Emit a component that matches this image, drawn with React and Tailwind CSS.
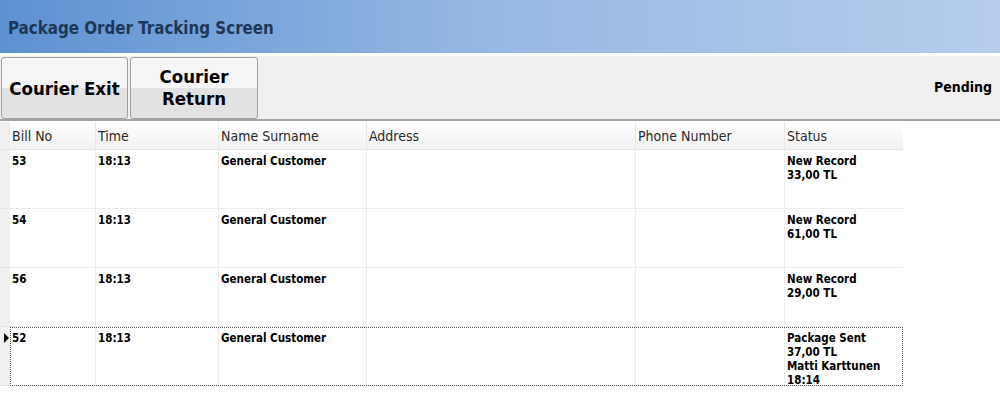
import React from "react";

const rows = [
  { bill: "53", time: "18:13", name: "General Customer", status: ["New Record", "33,00 TL"] },
  { bill: "54", time: "18:13", name: "General Customer", status: ["New Record", "61,00 TL"] },
  { bill: "56", time: "18:13", name: "General Customer", status: ["New Record", "29,00 TL"] },
  { bill: "52", time: "18:13", name: "General Customer", status: ["Package Sent", "37,00 TL", "Matti Karttunen", "18:14"], current: true },
];

const cols = "grid grid-cols-[86px_123px_148px_269px_149px_118px]";

const App = () => {
  return (
    <div className="w-[1000px] h-[397px] overflow-hidden bg-white font-['DejaVu_Sans_Condensed','DejaVu_Sans',sans-serif] text-black">
      {/* Title bar */}
      <div className="h-[53px] bg-gradient-to-r from-[#5d91d2] via-[#98b9e4] to-[#b6cdec] flex items-center pl-[8px] pt-[5px]">
        <h1 className="text-[16.8px] font-bold text-[#1d3856]">Package Order Tracking Screen</h1>
      </div>

      {/* Toolbar */}
      <div className="h-[68px] border-t-[3px] border-white bg-[#f0f0f0] border-b-2 border-b-[#a4a4a4] flex items-center pl-px pr-[8px]">
        <button className="w-[127px] h-[62px] rounded-[3px] border border-[#a0a0a0] bg-gradient-to-b from-[#f6f6f6] from-50% to-[#e2e2e2] to-50% text-[18.5px] font-bold leading-[22px] pt-[2px]">
          Courier Exit
        </button>
        <button className="ml-[2px] w-[128px] h-[62px] rounded-[3px] border border-[#a0a0a0] bg-gradient-to-b from-[#f6f6f6] from-50% to-[#e2e2e2] to-50% text-[18.5px] font-bold leading-[22px] pt-[1px]">
          Courier
          <br />
          Return
        </button>
        <span className="ml-auto text-[14px] font-bold">Pending</span>
      </div>

      {/* Grid */}
      <div className="flex">
        <div className="w-[903px]">
          <div className="flex h-[28px] border-b border-[#e4e4e4] bg-gradient-to-b from-white to-[#f1f1f1] mt-[1px]">
            <div className="w-[10px] bg-[#f0f0f0]" />
            <div className={`${cols} text-[14px] text-[#2b2b2b]`}>
              {["Bill No", "Time", "Name Surname", "Address", "Phone Number", "Status"].map((h) => (
                <div key={h} className="h-full flex items-center pl-[2px] pt-[2px] border-r border-[#e8e8e8] last:border-r-0">
                  {h}
                </div>
              ))}
            </div>
          </div>
          {rows.map((r) => (
            <div key={r.bill} className="flex h-[59px]">
              <div className="relative w-[10px] bg-[#f0f0f0] border-b border-[#e4e4e4]">
                {r.current && (
                  <span className="absolute left-[4px] top-[6px] w-0 h-0 border-y-[5px] border-y-transparent border-l-[5px] border-l-black" />
                )}
              </div>
              <div
                className={`${cols} text-[11.5px] font-bold leading-[14px] border-b border-[#ececec] ${
                  r.current ? "outline outline-1 outline-dotted outline-[#555] -outline-offset-1" : ""
                }`}
              >
                <div className="pl-[2px] pt-[4px] border-r border-[#ececec]">{r.bill}</div>
                <div className="pl-[2px] pt-[4px] border-r border-[#ececec]">{r.time}</div>
                <div className="pl-[2px] pt-[4px] border-r border-[#ececec]">{r.name}</div>
                <div className="border-r border-[#ececec]" />
                <div className="border-r border-[#ececec]" />
                <div className="pl-[2px] pt-[4px]">
                  {r.status.map((s) => (
                    <div key={s}>{s}</div>
                  ))}
                </div>
              </div>
            </div>
          ))}
        </div>
      </div>
    </div>
  );
};

export default App;
